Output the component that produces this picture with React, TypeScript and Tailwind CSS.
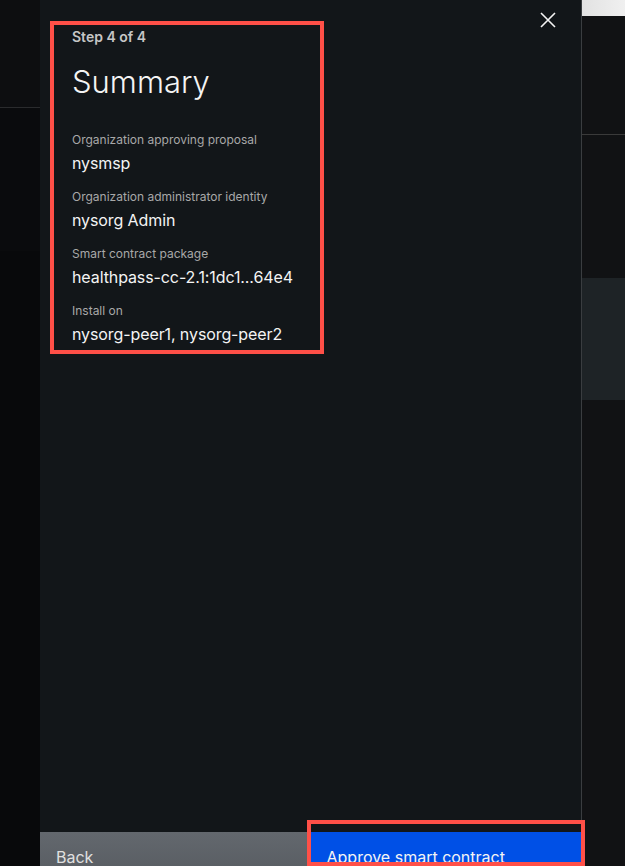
const rows = [
  { label: "Organization approving proposal", value: "nysmsp" },
  { label: "Organization administrator identity", value: "nysorg Admin" },
  { label: "Smart contract package", value: "healthpass-cc-2.1:1dc1...64e4" },
  { label: "Install on", value: "nysorg-peer1, nysorg-peer2" },
];

export default function App() {
  return (
    <div
      className="relative flex h-[866px] w-[625px] overflow-hidden bg-[#0a0b0d]"
      style={{ fontFamily: "Inter, 'Noto Sans', sans-serif" }}
    >
      {/* left backdrop strip */}
      <div className="flex w-[40px] shrink-0 flex-col">
        <div className="h-[108px] border-b border-[#2a2b2d] bg-[#0d0e10]" />
        <div className="h-[143px] bg-[#0a0b0d]" />
        <div className="flex-1 bg-[#08090b]" />
      </div>

      {/* side panel */}
      <div className="flex h-[896px] w-[542px] shrink-0 flex-col border-r border-[#3a3d40] bg-[#121619]">
        <div className="relative flex-1 px-8 pt-[28px]">
          <button className="absolute right-[25px] top-[12px] flex h-4 w-4 items-center justify-center text-[#f4f4f4]">
            <svg width="16" height="16" viewBox="0 0 16 16" fill="none">
              <path d="M1 1L15 15M15 1L1 15" stroke="currentColor" strokeWidth="1.6" />
            </svg>
          </button>
          <p className="text-[14px] font-semibold leading-[18px] text-[#c6c6c6]">Step 4 of 4</p>
          <h1 className="mt-[16px] text-[31px] font-light leading-[40px] text-[#f4f4f4]">Summary</h1>
          <div className="mt-[30px] flex flex-col gap-[17px]">
            {rows.map((r) => (
              <div key={r.label} className="flex flex-col gap-[6px]">
                <span className="text-[12px] leading-[16px] text-[#a8a8a8]">{r.label}</span>
                <span className="text-[16px] leading-[18px] tracking-[-0.1px] text-[#f4f4f4]">{r.value}</span>
              </div>
            ))}
          </div>
        </div>
        <div className="grid h-16 shrink-0 grid-cols-2">
          <button className="flex items-start bg-gradient-to-b from-[#63686e] to-[#53575c] px-4 pt-[15px] text-left text-[16px] leading-[20px] text-[#e0e0e0]">
            Back
          </button>
          <button className="flex items-start bg-[#0050e6] px-4 pt-[15px] text-left text-[16px] leading-[20px] text-[#f4f4f4]">
            Approve smart contract
          </button>
        </div>
      </div>

      {/* right backdrop strip */}
      <div className="flex flex-1 flex-col bg-[#111214]">
        <div className="h-[16px] bg-gradient-to-r from-[#e2e2e2] to-[#f0f0f0]" />
        <div className="h-[119px] border-b border-[#3a3a3a]" />
        <div className="h-[143px]" />
        <div className="h-[122px] bg-[#1e2326]" />
        <div className="flex-1" />
      </div>

      {/* annotation boxes */}
      <div className="pointer-events-none absolute left-[50px] top-[21px] h-[333px] w-[274px] border-4 border-[#ff5048]" />
      <div className="pointer-events-none absolute left-[307px] top-[820px] h-[46px] w-[278px] border-4 border-[#ff5048]" />
    </div>
  );
}
